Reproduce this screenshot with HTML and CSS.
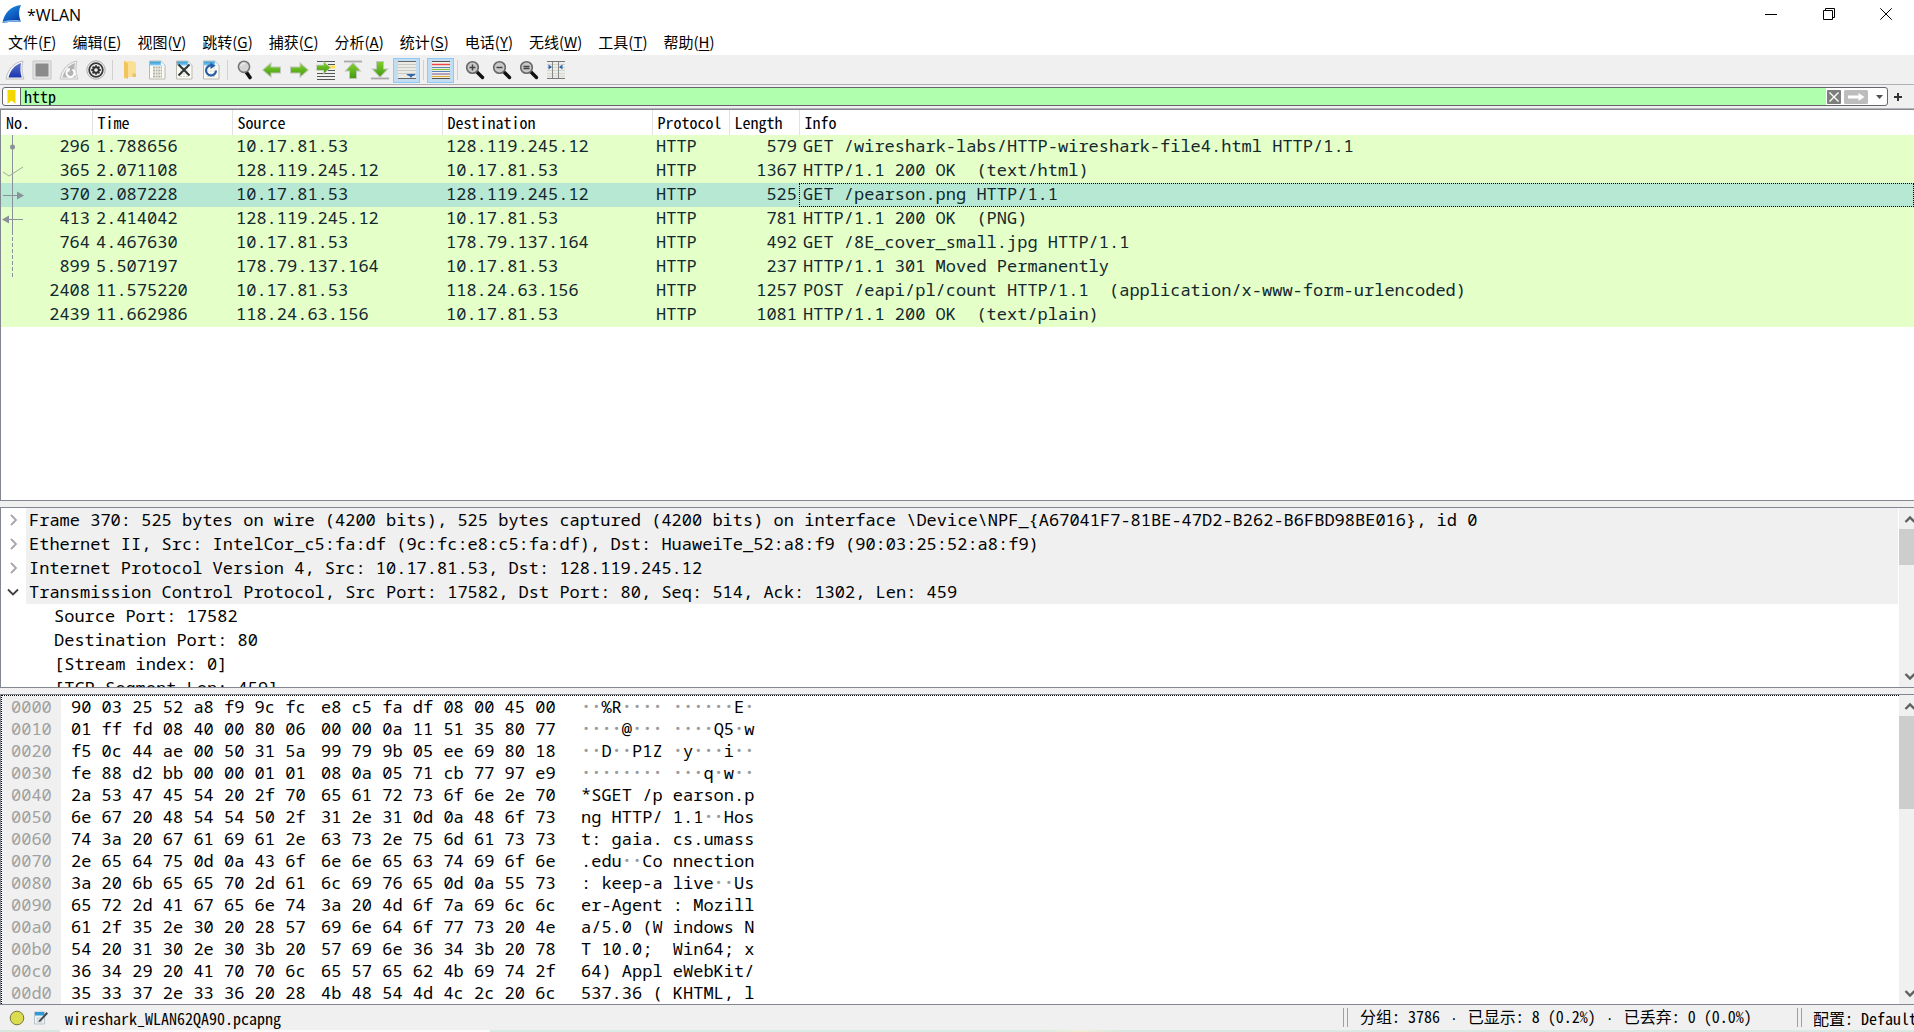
FILE: index.html
```html
<!DOCTYPE html>
<html lang="zh-CN">
<head>
<meta charset="utf-8">
<title>*WLAN</title>
<link rel="stylesheet" href="styles.css">
</head>
<body>
<svg width="0" height="0" class="defs" aria-hidden="true">
  <defs>
    <linearGradient id="fin-blue" x1="0" y1="0" x2="0.6" y2="1"><stop offset="0" stop-color="#1b9af0"/><stop offset="1" stop-color="#0a3fa8"/></linearGradient>
    <linearGradient id="fin-navy" x1="0" y1="0" x2="0" y2="1"><stop offset="0" stop-color="#5873c8"/><stop offset="1" stop-color="#1b34b0"/></linearGradient>
    <linearGradient id="leaf" x1="0" y1="0" x2="0" y2="1"><stop offset="0" stop-color="#7fd02c"/><stop offset="1" stop-color="#459b10"/></linearGradient>
    <linearGradient id="sky" x1="0" y1="0" x2="0" y2="1"><stop offset="0" stop-color="#2a97d8"/><stop offset="1" stop-color="#8fd0f2"/></linearGradient>
    <symbol id="page" viewBox="0 0 20 20"><path d="M2.500 1h11.500l4 4v14H2.500z" fill="#fbfbf3" stroke="#b9b9b0"/><path d="M3 1.500h11v4H3z" fill="url(#sky)"/><path d="M14 1.500v4h4z" fill="#fff" stroke="#c8dce8" stroke-width=".6"/></symbol>
    <symbol id="lens" viewBox="0 0 20 20"><path d="M11 11l6.500 6.500" stroke="#111" stroke-width="3.400" stroke-linecap="round"/><circle cx="7.500" cy="7.500" r="5.800" fill="#c9c9c9" stroke="#666" stroke-width="1.600"/></symbol>
    <symbol id="up" viewBox="0 0 16 10"><path d="M1.500 8L6 3.500 10.500 8" fill="none" stroke="#606060" stroke-width="2.400"/></symbol>
    <symbol id="down" viewBox="0 0 16 10"><path d="M1.500 2L6 6.500 10.500 2" fill="none" stroke="#606060" stroke-width="2.400"/></symbol>
    <symbol id="closed" viewBox="0 0 12 12"><path d="M4 1l5 5-5 5" fill="none" stroke="#a6a6a6" stroke-width="1.800"/></symbol>
    <symbol id="open" viewBox="0 0 12 12"><path d="M1 3.500l5 5 5-5" fill="none" stroke="#404040" stroke-width="1.800"/></symbol>
  </defs>
</svg>

<header class="titlebar">
  <svg class="logo" viewBox="0 0 20 20"><path d="M.5 19C2 9.500 8 2.500 19 1c-2.500 5-2.500 11 0 17-6-.6-12-.4-18.500 1z" fill="url(#fin-blue)"/><path d="M.5 19c6.500-1.400 12.500-1.600 18.500-1l-.5-1.500c-6-.8-11.500-.4-17 .8z" fill="#7fb4e6"/></svg>
  <h1 class="title">*WLAN</h1>
  <div class="winbtns">
    <button class="winbtn" aria-label="最小化"><svg viewBox="0 0 12 12"><path d="M0 6.500h12" stroke="#000"/></svg></button>
    <button class="winbtn" aria-label="还原"><svg viewBox="0 0 12 12"><path d="M.5 2.500h9v9h-9zM2.500 2.500v-2h9v9h-2" fill="none" stroke="#000"/></svg></button>
    <button class="winbtn" aria-label="关闭"><svg viewBox="0 0 12 12"><path d="M.3.3l11.400 11.400M11.700.3L.3 11.700" stroke="#000"/></svg></button>
  </div>
</header>

<nav class="menubar">
  <button class="menu">文件(<u>F</u>)</button>
  <button class="menu">编辑(<u>E</u>)</button>
  <button class="menu">视图(<u>V</u>)</button>
  <button class="menu">跳转(<u>G</u>)</button>
  <button class="menu">捕获(<u>C</u>)</button>
  <button class="menu">分析(<u>A</u>)</button>
  <button class="menu">统计(<u>S</u>)</button>
  <button class="menu">电话(<u>Y</u>)</button>
  <button class="menu">无线(<u>W</u>)</button>
  <button class="menu">工具(<u>T</u>)</button>
  <button class="menu">帮助(<u>H</u>)</button>
</nav>

<div class="toolbar" role="toolbar">
  <button class="tool" aria-label="开始捕获"><svg viewBox="0 0 20 20"><path d="M1 19C3 9.500 8.500 2.500 18 1c-1.500 6-1.500 12 1 18z" fill="#f8f8f8" stroke="#bdbdbd"/><path d="M3.500 17.500C5.500 10.500 9.500 5 16 3c-1 5-.8 10 .8 14.500z" fill="url(#fin-navy)"/></svg></button>
  <button class="tool" aria-label="停止捕获"><svg viewBox="0 0 20 20"><path d="M1 1h18v18H1z" fill="#e4e4e4" stroke="#c4c4c4"/><path d="M3.500 3.500h13v13h-13z" fill="#8b8b8b"/></svg></button>
  <button class="tool" aria-label="重新开始捕获"><svg viewBox="0 0 20 20"><path d="M1 19C3 9.500 8.500 2.500 18 1c-1.500 6-1.500 12 1 18z" fill="#f0f0f0" stroke="#c4c4c4"/><path d="M3.500 17.500C5.500 10.500 9.500 5 16 3c-1 5-.8 10 .8 14.500z" fill="#b4b4b4"/><path d="M13.500 9.500a4 4 0 1 1-5 .8" fill="none" stroke="#fff" stroke-width="2"/><path d="M6.500 8.500l4.500-.3-.8 4z" fill="#fff"/></svg></button>
  <button class="tool" aria-label="捕获选项"><svg viewBox="0 0 20 20"><circle cx="10" cy="10" r="9.200" fill="#f4f4f4" stroke="#aaa"/><circle cx="10" cy="10" r="6.800" fill="#f4f4f4" stroke="#3a3a3a" stroke-width="1.800"/><circle cx="10" cy="10" r="2.800" fill="none" stroke="#333" stroke-width="2"/><path d="M10 5.200v2M10 12.800v2M5.200 10h2M12.800 10h2M6.600 6.600l1.500 1.500M11.900 11.900l1.500 1.500M13.400 6.600l-1.500 1.500M8.100 11.900l-1.500 1.500" stroke="#333" stroke-width="1.800"/></svg></button>
  <span class="sep"></span>
  <button class="tool" aria-label="打开"><svg viewBox="0 0 20 20"><path d="M4 1h8l4 1.500V17H7l-3 1.500z" fill="#fbdf94"/><path d="M4 1l4 2.500V19l-4-1.500z" fill="#f0c55c"/><path d="M12.500 13.500H16V17h-3.500z" fill="#e9c36a"/></svg></button>
  <button class="tool" aria-label="保存"><svg viewBox="0 0 20 20"><use href="#page"/><path d="M6 7.500h9M6 10.500h9M6 13.500h9M6 16.500h9" stroke="#b4b4aa" stroke-width="1.800" stroke-dasharray="2 .6"/></svg></button>
  <button class="tool" aria-label="关闭文件"><svg viewBox="0 0 20 20"><use href="#page"/><path d="M6 8h9M6 11h9M6 14h9M6 16.500h9" stroke="#d0d0c8" stroke-dasharray="2 1"/><path d="M4.500 4.500l11 11M15.500 4.500l-11 11" stroke="#2c3438" stroke-width="2"/></svg></button>
  <button class="tool" aria-label="重新加载"><svg viewBox="0 0 20 20"><use href="#page"/><path d="M6 8h9M6 11h9M6 14h9M6 16.500h9" stroke="#d8d8d0" stroke-dasharray="2 1"/><path d="M15 10.500a5 5 0 1 1-4.500-5" fill="none" stroke="#2a5da8" stroke-width="2.200"/><path d="M9.500 2.500l5 3.200-5 3.200z" fill="#2a5da8"/></svg></button>
  <span class="sep"></span>
  <button class="tool" aria-label="查找分组"><svg viewBox="0 0 20 20"><path d="M10.500 11l4.500 6.500" stroke="#111" stroke-width="3.600" stroke-linecap="round"/><circle cx="9" cy="6.800" r="5.600" fill="#d4d4d4" stroke="#777" stroke-width="1.600"/><path d="M6 6a3 3 0 0 1 4-2" fill="none" stroke="#fff"/></svg></button>
  <button class="tool" aria-label="上一分组"><svg viewBox="0 0 20 20"><path d="M1.500 10l7-6v3.500h9.500v5H8.500V16z" fill="url(#leaf)" stroke="#c2c6be" stroke-width="2" paint-order="stroke"/></svg></button>
  <button class="tool" aria-label="下一分组"><svg viewBox="0 0 20 20"><path d="M18.500 10l-7-6v3.500H2v5h9.500V16z" fill="url(#leaf)" stroke="#c2c6be" stroke-width="2" paint-order="stroke"/></svg></button>
  <button class="tool" aria-label="转到分组"><svg viewBox="0 0 20 20"><path d="M1 1.500h18M1 13.500h18M1 16.500h18M1 19.500h18M12 10.500h7" stroke="#555"/><path d="M12 4.500h7" stroke="#555"/><path d="M14 7h5" stroke="#ffe14d" stroke-width="3"/><path d="M14 7.500l-6-5v3H1v4.500h7v3z" fill="url(#leaf)" stroke="#c2c6be" stroke-width="1.500" paint-order="stroke"/></svg></button>
  <button class="tool" aria-label="第一个分组"><svg viewBox="0 0 20 20"><path d="M1 1.500h18" stroke="#aaa" stroke-width="1.800"/><path d="M10 3.500l6.500 7H13V18H7v-7.500H3.500z" fill="url(#leaf)" stroke="#c2c6be" stroke-width="2" paint-order="stroke"/></svg></button>
  <button class="tool" aria-label="最后一个分组"><svg viewBox="0 0 20 20"><path d="M1 18.500h18" stroke="#aaa" stroke-width="1.800"/><path d="M10 16.500l6.500-7H13V2H7v7.500H3.500z" fill="url(#leaf)" stroke="#c2c6be" stroke-width="2" paint-order="stroke"/></svg></button>
  <button class="tool on" aria-label="自动滚动" aria-pressed="true"><svg viewBox="0 0 20 20"><path d="M1 1h18v18H1z" fill="#e9ebe4"/><path d="M1 4.500h18M1 7.500h18M1 10.500h18M1 13.500h18" stroke="#c8cac4"/><path d="M1 1.500h18M1 18.500h18" stroke="#666"/><path d="M9.500 14h9l-1 1.500-2 .5-1.500 2-1.500-2-2-.5z" fill="#3266ad"/></svg></button>
  <span class="sep"></span>
  <button class="tool on" aria-label="着色" aria-pressed="true"><svg viewBox="0 0 20 20"><path d="M1 1h18v18H1z" fill="#f3f4ee"/><path d="M1 1.500h18M1 18.500h18" stroke="#555"/><path d="M1 4.500h18" stroke="#e8484a" stroke-width="1.500"/><path d="M1 7.500h18M1 11.500h18" stroke="#5a82bd" stroke-width="1.200"/><path d="M1 9.500h18" stroke="#85c440" stroke-width="1.200"/><path d="M1 14h18" stroke="#8b6aa5" stroke-width="1.200"/><path d="M1 16.500h18" stroke="#d8ac30" stroke-width="1.200"/></svg></button>
  <span class="sep"></span>
  <button class="tool" aria-label="放大"><svg viewBox="0 0 20 20"><use href="#lens"/><path d="M4.500 7.500h6M7.500 4.500v6" stroke="#444" stroke-width="1.500"/></svg></button>
  <button class="tool" aria-label="缩小"><svg viewBox="0 0 20 20"><use href="#lens"/><path d="M4.500 7.500h6" stroke="#444" stroke-width="1.500"/></svg></button>
  <button class="tool" aria-label="正常大小"><svg viewBox="0 0 20 20"><use href="#lens"/><path d="M4.500 6.500h6M4.500 8.500h6" stroke="#444" stroke-width="1.500"/></svg></button>
  <button class="tool" aria-label="调整列宽"><svg viewBox="0 0 20 20"><path d="M1 1h18v18H1z" fill="#eceee8"/><path d="M1 4.500h18M1 7.500h18M1 10.500h18M1 13.500h18M1 16h18" stroke="#d4d6d0"/><path d="M1 1.500h18M1 18.500h18" stroke="#777"/><path d="M6.500 2v16M12.500 2v16" stroke="#888"/><path d="M2.500 4.500l3.500 2.500-3.500 2.500zM16.500 4.500L13 7l3.500 2.500z" fill="#2f64b0"/></svg></button>
</div>

<form class="filterbar">
  <div class="filterbox">
    <button type="button" class="bookmark" aria-label="书签"><svg viewBox="0 0 9 14"><path d="M.5 0h8v14l-4-3.500-4 3.500z" fill="#f2d600"/></svg></button>
    <input class="filter" type="text" value="http" aria-label="显示过滤器">
    <button type="button" class="clear" aria-label="清除"><svg viewBox="0 0 14 14"><rect width="14" height="14" rx="1" fill="#7d7f7c"/><path d="M2.500 2.500l9 9M11.500 2.500l-9 9" stroke="#fff" stroke-width="1.400"/></svg></button>
    <button type="button" class="apply" aria-label="应用"><svg viewBox="0 0 24 14"><rect width="24" height="14" rx="1.500" fill="#bdbdbd"/><path d="M4 5.500h10.500V3l6 4-6 4V8.500H4z" fill="#fff"/></svg></button>
    <button type="button" class="recent" aria-label="历史"><svg viewBox="0 0 7 4"><path d="M0 0h7L3.500 4z" fill="#505050"/></svg></button>
  </div>
  <button type="button" class="add" aria-label="添加"><svg viewBox="0 0 8 8"><path d="M4 0v8M0 4h8" stroke="#333" stroke-width="2"/></svg></button>
</form>

<main class="panes">
  <section class="pane packets">
    <table class="list">
      <colgroup><col class="c-no"><col class="c-time"><col class="c-addr"><col class="c-addr"><col class="c-proto"><col class="c-len"><col></colgroup>
      <thead><tr><th>No.</th><th>Time</th><th>Source</th><th>Destination</th><th>Protocol</th><th>Length</th><th>Info</th></tr></thead>
      <tbody>
        <tr><td class="num"><svg class="rel" viewBox="0 0 26 24"><path d="M11.500 0v24"/><circle cx="11.500" cy="12" r="2.500" class="fill"/></svg>296</td><td>1.788656</td><td>10.17.81.53</td><td>128.119.245.12</td><td>HTTP</td><td class="num">579</td><td>GET /wireshark-labs/HTTP-wireshark-file4.html HTTP/1.1</td></tr>
        <tr><td class="num"><svg class="rel" viewBox="0 0 26 24"><path d="M11.500 0v24"/><path d="M2 13l6 4L22 8" class="thin"/></svg>365</td><td>2.071108</td><td>128.119.245.12</td><td>10.17.81.53</td><td>HTTP</td><td class="num">1367</td><td>HTTP/1.1 200 OK&nbsp; (text/html)</td></tr>
        <tr class="sel"><td class="num"><svg class="rel" viewBox="0 0 26 24"><path d="M11.500 0v24M2 12.500h15"/><path d="M16 8.500l7 4-7 4z" class="fill"/></svg>370</td><td>2.087228</td><td>10.17.81.53</td><td>128.119.245.12</td><td>HTTP</td><td class="num">525</td><td class="focus">GET /pearson.png HTTP/1.1</td></tr>
        <tr><td class="num"><svg class="rel" viewBox="0 0 26 24"><path d="M11.500 0v24M8 12.500h14"/><path d="M8 8.500l-7 4 7 4z" class="fill"/></svg>413</td><td>2.414042</td><td>128.119.245.12</td><td>10.17.81.53</td><td>HTTP</td><td class="num">781</td><td>HTTP/1.1 200 OK&nbsp; (PNG)</td></tr>
        <tr><td class="num"><svg class="rel" viewBox="0 0 26 24"><path d="M11.500 0v24" class="dash"/></svg>764</td><td>4.467630</td><td>10.17.81.53</td><td>178.79.137.164</td><td>HTTP</td><td class="num">492</td><td>GET /8E_cover_small.jpg HTTP/1.1</td></tr>
        <tr><td class="num"><svg class="rel" viewBox="0 0 26 24"><path d="M11.500 0v22" class="dash"/></svg>899</td><td>5.507197</td><td>178.79.137.164</td><td>10.17.81.53</td><td>HTTP</td><td class="num">237</td><td>HTTP/1.1 301 Moved Permanently</td></tr>
        <tr><td class="num">2408</td><td>11.575220</td><td>10.17.81.53</td><td>118.24.63.156</td><td>HTTP</td><td class="num">1257</td><td>POST /eapi/pl/count HTTP/1.1&nbsp; (application/x-www-form-urlencoded)</td></tr>
        <tr><td class="num">2439</td><td>11.662986</td><td>118.24.63.156</td><td>10.17.81.53</td><td>HTTP</td><td class="num">1081</td><td>HTTP/1.1 200 OK&nbsp; (text/plain)</td></tr>
      </tbody>
    </table>
  </section>

  <section class="pane details">
    <ul class="tree">
      <li class="proto"><svg class="twist"><use href="#closed"/></svg><span>Frame 370: 525 bytes on wire (4200 bits), 525 bytes captured (4200 bits) on interface \Device\NPF_{A67041F7-81BE-47D2-B262-B6FBD98BE016}, id 0</span></li>
      <li class="proto"><svg class="twist"><use href="#closed"/></svg><span>Ethernet II, Src: IntelCor_c5:fa:df (9c:fc:e8:c5:fa:df), Dst: HuaweiTe_52:a8:f9 (90:03:25:52:a8:f9)</span></li>
      <li class="proto"><svg class="twist"><use href="#closed"/></svg><span>Internet Protocol Version 4, Src: 10.17.81.53, Dst: 128.119.245.12</span></li>
      <li class="proto"><svg class="twist"><use href="#open"/></svg><span>Transmission Control Protocol, Src Port: 17582, Dst Port: 80, Seq: 514, Ack: 1302, Len: 459</span></li>
      <li class="field">Source Port: 17582</li>
      <li class="field">Destination Port: 80</li>
      <li class="field">[Stream index: 0]</li>
      <li class="field">[TCP Segment Len: 459]</li>
    </ul>
    <div class="scroll">
      <button class="arrow" aria-label="向上滚动"><svg viewBox="0 0 16 10"><use href="#up"/></svg></button>
      <div class="thumb short"></div>
      <button class="arrow end" aria-label="向下滚动"><svg viewBox="0 0 16 10"><use href="#down"/></svg></button>
    </div>
  </section>

  <section class="pane bytes">
    <div class="dump">
      <table class="hex">
        <colgroup><col class="c-off"><col class="c-left"><col class="c-right"><col></colgroup>
        <tbody>
          <tr><th>0000</th><td>90 03 25 52 a8 f9 9c fc</td><td>e8 c5 fa df 08 00 45 00</td><td><i>··</i>%R<i>···· ······</i>E<i>·</i></td></tr>
          <tr><th>0010</th><td>01 ff fd 08 40 00 80 06</td><td>00 00 0a 11 51 35 80 77</td><td><i>····</i>@<i>··· ····</i>Q5<i>·</i>w</td></tr>
          <tr><th>0020</th><td>f5 0c 44 ae 00 50 31 5a</td><td>99 79 9b 05 ee 69 80 18</td><td><i>··</i>D<i>··</i>P1Z <i>·</i>y<i>···</i>i<i>··</i></td></tr>
          <tr><th>0030</th><td>fe 88 d2 bb 00 00 01 01</td><td>08 0a 05 71 cb 77 97 e9</td><td><i>········ ···</i>q<i>·</i>w<i>··</i></td></tr>
          <tr><th>0040</th><td>2a 53 47 45 54 20 2f 70</td><td>65 61 72 73 6f 6e 2e 70</td><td>*SGET /p earson.p</td></tr>
          <tr><th>0050</th><td>6e 67 20 48 54 54 50 2f</td><td>31 2e 31 0d 0a 48 6f 73</td><td>ng HTTP/ 1.1<i>··</i>Hos</td></tr>
          <tr><th>0060</th><td>74 3a 20 67 61 69 61 2e</td><td>63 73 2e 75 6d 61 73 73</td><td>t: gaia. cs.umass</td></tr>
          <tr><th>0070</th><td>2e 65 64 75 0d 0a 43 6f</td><td>6e 6e 65 63 74 69 6f 6e</td><td>.edu<i>··</i>Co nnection</td></tr>
          <tr><th>0080</th><td>3a 20 6b 65 65 70 2d 61</td><td>6c 69 76 65 0d 0a 55 73</td><td>: keep-a live<i>··</i>Us</td></tr>
          <tr><th>0090</th><td>65 72 2d 41 67 65 6e 74</td><td>3a 20 4d 6f 7a 69 6c 6c</td><td>er-Agent : Mozill</td></tr>
          <tr><th>00a0</th><td>61 2f 35 2e 30 20 28 57</td><td>69 6e 64 6f 77 73 20 4e</td><td>a/5.0 (W indows N</td></tr>
          <tr><th>00b0</th><td>54 20 31 30 2e 30 3b 20</td><td>57 69 6e 36 34 3b 20 78</td><td>T 10.0;  Win64; x</td></tr>
          <tr><th>00c0</th><td>36 34 29 20 41 70 70 6c</td><td>65 57 65 62 4b 69 74 2f</td><td>64) Appl eWebKit/</td></tr>
          <tr><th>00d0</th><td>35 33 37 2e 33 36 20 28</td><td>4b 48 54 4d 4c 2c 20 6c</td><td>537.36 ( KHTML, l</td></tr>
        </tbody>
      </table>
    </div>
    <div class="scroll">
      <button class="arrow" aria-label="向上滚动"><svg viewBox="0 0 16 10"><use href="#up"/></svg></button>
      <div class="thumb long"></div>
      <button class="arrow end" aria-label="向下滚动"><svg viewBox="0 0 16 10"><use href="#down"/></svg></button>
    </div>
  </section>
</main>

<footer class="status">
  <button class="expert" aria-label="专家信息"><svg viewBox="0 0 16 16"><circle cx="8" cy="8" r="6.800" fill="#dcdc50" stroke="#77773a"/></svg></button>
  <button class="comment" aria-label="捕获文件属性"><svg viewBox="0 0 16 16"><path d="M1.500 2h10v12h-10z" fill="#f2f4f2" stroke="#b8c4cc"/><path d="M2 2h9v3.500H2z" fill="#2e9ad8"/><path d="M3.500 8h6M3.500 10h6M3.500 12h6" stroke="#c4c8c4"/><path d="M6 10.500L13.500 2l1.500 1.500L7.500 11.500 5.500 12z" fill="#3c4a52"/></svg></button>
  <span class="file">wireshark_WLAN62QA90.pcapng</span>
  <span class="grip"></span>
  <span class="counts">分组: 3786 <i>·</i> 已显示: 8 (0.2%) <i>·</i> 已丢弃: 0 (0.0%)</span>
  <span class="grip"></span>
  <button class="profile">配置: Default</button>
</footer>
<div class="desktop"></div>
</body>
</html>
```

FILE: styles.css
```css
:root {
  --line: #828790;
  --face: #f0f0f0;
  --mono: "Noto Sans Mono", "Liberation Mono", monospace;
  --ui: "Noto Sans Mono CJK SC", "Noto Sans CJK SC", monospace;
}
* { box-sizing: border-box; }
body {
  margin: 0;
  display: flex;
  flex-direction: column;
  height: 100vh;
  overflow: hidden;
  background: var(--face);
  color: #000;
}
.defs { position: absolute; }
button { border: 0; padding: 0; background: none; font: inherit; color: inherit; flex: none; }
button svg { display: block; }

.titlebar { display: flex; align-items: flex-start; height: 31px; background: #fff; flex: none; }
.logo { width: 20px; height: 20px; margin: 4px 0 0 2px; }
.title { margin: 3px 0 0 5px; font: 16px/24px "Open Sans", "Noto Sans", sans-serif; flex: 1; }
.winbtns { display: flex; }
.winbtn { width: 58px; height: 28px; display: grid; place-items: center; }
.winbtn:last-child { width: 56px; }
.winbtn svg { width: 12px; height: 12px; }

.menubar {
  display: flex;
  align-items: flex-start;
  flex: none;
  height: 25px;
  background: #fff;
  border-bottom: 1px solid #f0f0f0;
  font: 15px/21px "Noto Sans CJK SC", sans-serif;
}
.menu { padding: 0 8px; }
.menu u { text-underline-offset: 2px; }

.toolbar {
  display: flex;
  align-items: center;
  flex: none;
  height: 29px;
  padding-left: 1px;
  border-bottom: 1px solid #b0b0b4;
}
.tool { width: 27px; height: 25px; display: grid; place-items: center; border: 1px solid transparent; }
.tool svg { width: 20px; height: 20px; }
.tool.on { background: #c2dcf2; border-color: #90c8f6; }
.sep { width: 1px; height: 20px; margin: 0 3px; background: #d0d0d0; flex: none; }

.filterbar {
  display: flex;
  align-items: center;
  flex: none;
  height: 24px;
  padding: 0 12px 0 2px;
  gap: 6px;
  border-bottom: 1px solid #b4b4b8;
}
.filterbox {
  flex: 1;
  display: flex;
  align-items: center;
  height: 19px;
  background: #fff;
  border: 1px solid #65656b;
  border-radius: 3px;
}
.bookmark { width: 18px; height: 17px; display: grid; place-items: center; border-right: 1px solid #65656b; }
.bookmark svg { width: 9px; height: 14px; }
.filter {
  flex: 1;
  min-width: 0;
  height: 17px;
  padding: 0 3px;
  border: 0;
  outline: 0;
  background: #afffaf;
  color: #000;
  font: 16px/17px var(--ui);
}
.clear { margin-left: 1px; }
.clear svg { width: 14px; height: 14px; }
.apply { margin-left: 3px; }
.apply svg { width: 24px; height: 14px; }
.recent { margin: 0 4px 0 8px; }
.recent svg { width: 7px; height: 4px; }
.add svg { width: 8px; height: 8px; }

.panes { flex: 1; min-height: 0; display: flex; flex-direction: column; gap: 6px; }
.pane { border: 1px solid var(--line); border-right: 0; background: #fff; min-height: 0; overflow: hidden; display: flex; }
.packets { flex: 393 1 0; }
.details { flex: 180 1 0; }
.bytes { flex: 311 1 0; }

.list { width: 100%; height: max-content; table-layout: fixed; border-collapse: collapse; color: #12272e; font: 17px/22px var(--mono); }
.c-no { width: 91px; }
.c-time { width: 140px; }
.c-addr { width: 210px; }
.c-proto { width: 77px; }
.c-len { width: 70px; }
.list th {
  height: 25px;
  padding: 0 0 0 5px;
  text-align: left;
  color: #000;
  font: 16px/25px var(--ui);
  border-right: 1px solid #e2e2e2;
}
.list th:last-child { border-right: 0; }
.list td { height: 24px; padding: 0 2px 0 4px; vertical-align: top; white-space: pre; background: #e4ffc7; }
.list .num { text-align: right; }
.list .sel td { background: #b7e8d3; }
.list .focus { outline: 1px dotted #000; outline-offset: -1px; }
.num { position: relative; }
.rel { position: absolute; left: 0; top: 0; width: 26px; height: 24px; fill: none; stroke: #8a9199; }
.rel .fill { fill: #8a9199; stroke: none; }
.rel .thin { stroke: #a0a9a2; }
.rel .dash { stroke-dasharray: 4 2; }

.tree { flex: 1; min-width: 0; margin: 0; padding: 0; list-style: none; font: 17px/24px var(--mono); overflow: hidden; }
.tree li { height: 24px; white-space: pre; }
.proto { display: flex; align-items: center; }
.proto span { flex: 1; min-width: 0; height: 24px; padding-left: 3px; background: #f0f0f0; margin-right: 1px; }
.twist { width: 12px; height: 12px; margin: 0 7px 0 6px; flex: none; }
.field { padding-left: 53px; }

.scroll { width: 15px; flex: none; background: #f0f0f0; display: flex; flex-direction: column; overflow: hidden; }
.arrow { height: 21px; width: 20px; padding-left: 5px; }
.arrow.end { margin-top: auto; }
.arrow svg { width: 16px; height: 10px; }
.thumb { background: #cdcdcd; }
.short { height: 20%; }
.long { height: 30%; }

.dump { flex: 1; min-width: 0; overflow: hidden; border: 1px dotted #000; border-bottom: 0; border-right: 0; }
.hex { width: 100%; table-layout: fixed; border-collapse: collapse; font: 17px/22px var(--mono); }
.c-off { width: 59px; }
.c-left { width: 250px; }
.c-right { width: 260px; }
.hex td, .hex th { height: 22px; padding: 0 0 0 10px; text-align: left; font-weight: normal; white-space: pre; }
.hex th { padding-left: 9px; background: #f0f0f0; color: #a0a0a0; }
.hex i { font-style: normal; font-weight: bold; color: #999; }

.status { display: flex; align-items: center; flex: none; height: 25px; padding-left: 9px; font: 16px/24px var(--ui); overflow: hidden; }
.expert svg, .comment svg { width: 16px; height: 16px; }
.comment { margin-left: 8px; }
.file { flex: 1; margin-left: 16px; }
.grip { width: 5px; height: 19px; border: solid #a0a0a0; border-width: 0 1px; flex: none; }
.counts { width: 438px; padding-left: 12px; margin-right: 11px; white-space: nowrap; }
.counts i { margin: 0 2px; font: 13px/24px "Liberation Mono", monospace; }
.profile { width: 112px; padding-left: 11px; text-align: left; white-space: nowrap; }
.desktop { height: 2px; flex: none; background: linear-gradient(90deg, #d8e6e0 0 60px, #fafafa 60px 490px, #d8ebe4 490px 1040px, #f1eed6 1080px, #d8e8e2 1120px); }
```
